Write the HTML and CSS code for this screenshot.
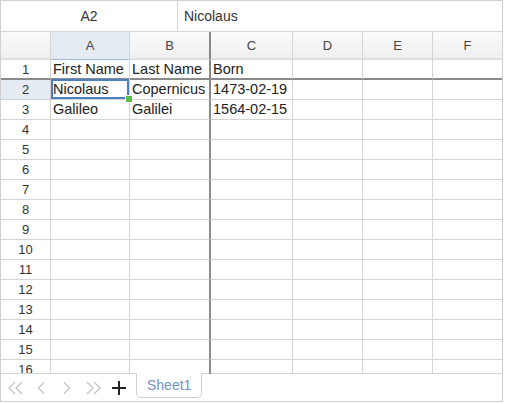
FILE: index.html
```html
<!DOCTYPE html>
<html>
<head>
<meta charset="utf-8">
<link rel="stylesheet" href="styles.css">
</head>
<body>
<div class="sheet">
  <div class="formula">
    <div class="namebox">A2</div>
    <div class="fvalue">Nicolaus</div>
  </div>
  <div class="gridwrap">
    <div class="grid">
      <div class="ch corner"></div>
      <div class="ch sel">A</div>
      <div class="ch frz">B</div>
      <div class="ch">C</div>
      <div class="ch">D</div>
      <div class="ch">E</div>
      <div class="ch">F</div>

      <div class="rh hfrz">1</div>
      <div class="c hfrz">First Name</div>
      <div class="c hfrz frz">Last Name</div>
      <div class="c hfrz">Born</div>
      <div class="c hfrz"></div>
      <div class="c hfrz"></div>
      <div class="c hfrz"></div>

      <div class="rh rsel">2</div>
      <div class="c active">Nicolaus<span class="handle"></span></div>
      <div class="c frz">Copernicus</div>
      <div class="c">1473-02-19</div>
      <div class="c"></div>
      <div class="c"></div>
      <div class="c"></div>

      <div class="rh">3</div>
      <div class="c">Galileo</div>
      <div class="c frz">Galilei</div>
      <div class="c">1564-02-15</div>
      <div class="c"></div>
      <div class="c"></div>
      <div class="c"></div>

      <div class="rh">4</div><div class="c"></div><div class="c frz"></div><div class="c"></div><div class="c"></div><div class="c"></div><div class="c"></div>
      <div class="rh">5</div><div class="c"></div><div class="c frz"></div><div class="c"></div><div class="c"></div><div class="c"></div><div class="c"></div>
      <div class="rh">6</div><div class="c"></div><div class="c frz"></div><div class="c"></div><div class="c"></div><div class="c"></div><div class="c"></div>
      <div class="rh">7</div><div class="c"></div><div class="c frz"></div><div class="c"></div><div class="c"></div><div class="c"></div><div class="c"></div>
      <div class="rh">8</div><div class="c"></div><div class="c frz"></div><div class="c"></div><div class="c"></div><div class="c"></div><div class="c"></div>
      <div class="rh">9</div><div class="c"></div><div class="c frz"></div><div class="c"></div><div class="c"></div><div class="c"></div><div class="c"></div>
      <div class="rh">10</div><div class="c"></div><div class="c frz"></div><div class="c"></div><div class="c"></div><div class="c"></div><div class="c"></div>
      <div class="rh">11</div><div class="c"></div><div class="c frz"></div><div class="c"></div><div class="c"></div><div class="c"></div><div class="c"></div>
      <div class="rh">12</div><div class="c"></div><div class="c frz"></div><div class="c"></div><div class="c"></div><div class="c"></div><div class="c"></div>
      <div class="rh">13</div><div class="c"></div><div class="c frz"></div><div class="c"></div><div class="c"></div><div class="c"></div><div class="c"></div>
      <div class="rh">14</div><div class="c"></div><div class="c frz"></div><div class="c"></div><div class="c"></div><div class="c"></div><div class="c"></div>
      <div class="rh">15</div><div class="c"></div><div class="c frz"></div><div class="c"></div><div class="c"></div><div class="c"></div><div class="c"></div>
      <div class="rh">16</div><div class="c"></div><div class="c frz"></div><div class="c"></div><div class="c"></div><div class="c"></div><div class="c"></div>
    </div>
  </div>
  <div class="tabbar">
    <span class="nav"><svg width="15" height="14" viewBox="0 0 15 14"><path d="M7 1 L1 7 L7 13 M14 1 L8 7 L14 13" fill="none" stroke="#c6c6c6" stroke-width="1.4"/></svg></span>
    <span class="nav"><svg width="8" height="14" viewBox="0 0 8 14"><path d="M7 1.5 L1.5 7 L7 12.5" fill="none" stroke="#c6c6c6" stroke-width="1.4"/></svg></span>
    <span class="nav"><svg width="8" height="14" viewBox="0 0 8 14"><path d="M1 1.5 L6.5 7 L1 12.5" fill="none" stroke="#c6c6c6" stroke-width="1.4"/></svg></span>
    <span class="nav"><svg width="15" height="14" viewBox="0 0 15 14"><path d="M1 1 L7 7 L1 13 M8 1 L14 7 L8 13" fill="none" stroke="#c6c6c6" stroke-width="1.4"/></svg></span>
    <span class="add"><svg width="16" height="16" viewBox="0 0 16 16"><path d="M8 1 V15 M1 8 H15" fill="none" stroke="#222" stroke-width="2"/></svg></span>
    <div class="tab">Sheet1</div>
  </div>
</div>
</body>
</html>
```
FILE: styles.css
```css
html, body {
  margin: 0;
  padding: 0;
  background: #fff;
}
body {
  font-family: "Liberation Sans", Arial, sans-serif;
  color: #222;
}
.sheet {
  width: 503px;
  height: 402px;
  box-sizing: border-box;
  border: 1px solid #cfcfcf;
  display: flex;
  flex-direction: column;
  overflow: hidden;
}
.formula {
  height: 30px;
  flex: none;
  display: flex;
  border-bottom: 1px solid #d4d4d4;
  font-size: 14px;
  color: #333;
}
.namebox {
  width: 176px;
  border-right: 1px solid #d4d4d4;
  display: flex;
  align-items: center;
  justify-content: center;
}
.fvalue {
  padding-left: 6px;
  display: flex;
  align-items: center;
}
.gridwrap {
  height: 342px;
  flex: none;
  overflow: hidden;
}
.grid {
  display: grid;
  grid-template-columns: 50px 79px 81px 82px 70px 70px 70px;
  grid-template-rows: 28px;
  grid-auto-rows: 20px;
}
.grid > div {
  box-sizing: border-box;
  border-right: 1px solid #d4d4d4;
  border-bottom: 1px solid #d4d4d4;
  white-space: nowrap;
  overflow: hidden;
}
.ch {
  background: linear-gradient(#fafafa, #efefef);
  font-size: 13px;
  color: #444;
  display: flex;
  align-items: center;
  justify-content: center;
  box-shadow: inset 0 -3px 0 -2px #e2e2e2;
}
.grid > .ch {
  border-bottom: 1px solid #dcdcdc;
}
.grid > .ch.sel {
  background: #e5ebf2;
  border-bottom: 1px solid #9dbbe0;
  box-shadow: none;
}
.rh {
  font-size: 13px;
  color: #333;
  display: flex;
  align-items: center;
  justify-content: center;
  background: #fff;
}
.rh.rsel {
  background: #e5ebf2;
}
.c {
  font-size: 14.5px;
  line-height: 19px;
  padding-left: 2px;
  color: #222;
  position: relative;
}
.grid > .frz {
  border-right: 2px solid #8a8a8a;
}
.grid > .hfrz {
  border-bottom: 2px solid #8a8a8a;
}
.grid > .hfrz + .hfrz + .hfrz {
  border-right: 2px solid #8a8a8a;
}
.grid > .hfrz + .hfrz + .hfrz + .hfrz {
  border-right: 1px solid #d4d4d4;
}
.grid > .active {
  overflow: visible;
  box-shadow: inset 0 0 0 2px #4a7fc1;
  margin-top: -1px;
  padding-top: 1px;
}
.handle {
  position: absolute;
  right: -4px;
  bottom: -4px;
  width: 6px;
  height: 6px;
  background: #5bbf4a;
  border: 1px solid #fff;
  z-index: 2;
}
.tabbar {
  flex: 1;
  display: flex;
  align-items: flex-start;
  border-top: 1px solid #d4d4d4;
  margin-top: -1px;
  padding-left: 1px;
}
.nav {
  width: 26px;
  height: 28px;
  display: flex;
  align-items: center;
  justify-content: center;
}
.add {
  width: 26px;
  height: 28px;
  display: flex;
  align-items: center;
  justify-content: center;
  margin-right: 4px;
}
.tab {
  margin-top: -1px;
  height: 23px;
  padding: 0 10px;
  border: 1px solid #cfcfcf;
  border-top: 1px solid #fff;
  border-radius: 0 0 5px 5px;
  font-size: 14px;
  line-height: 23px;
  color: #6e93c4;
  background: #fff;
}
```
